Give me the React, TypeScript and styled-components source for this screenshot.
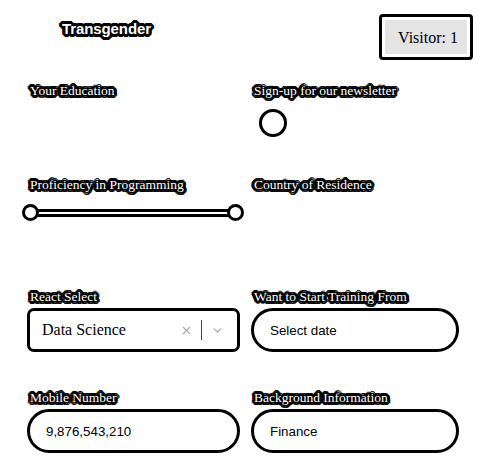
import React from 'react';
import styled, { createGlobalStyle } from 'styled-components';
import { X, ChevronDown } from 'lucide-react';

const GlobalStyle = createGlobalStyle`
    html, body {
        margin: 0;
        padding: 0;
        background: #fff;
    }
`;

const outline = `
    -1px -1px 0 #000, 1px -1px 0 #000, -1px 1px 0 #000, 1px 1px 0 #000,
    -2px -2px 0 #000, 2px -2px 0 #000, -2px 2px 0 #000, 2px 2px 0 #000,
    0 -3px 0 #000, 0 3px 0 #000, -3px 0 0 #000, 3px 0 0 #000,
    -3px -1px 0 #000, 3px -1px 0 #000, -3px 1px 0 #000, 3px 1px 0 #000,
    -1px -3px 0 #000, 1px -3px 0 #000, -1px 3px 0 #000, 1px 3px 0 #000,
    0 0 3px #000
`;

export default function App() {
    return (
        <>
            <GlobalStyle />
            <Page>
                <Header>
                    <Title>Transgender</Title>
                    <VisitorBadge>
                        <VisitorInner>Visitor: 1</VisitorInner>
                    </VisitorBadge>
                </Header>
                <FormGrid>
                    <Field>
                        <Label>Your Education</Label>
                    </Field>
                    <Field>
                        <Label>Sign-up for our newsletter</Label>
                        <Radio type="radio" />
                    </Field>
                    <Field>
                        <Label>Proficiency in Programming</Label>
                        <RangeSlider>
                            <Track />
                            <Thumb />
                            <Thumb />
                        </RangeSlider>
                    </Field>
                    <Field>
                        <Label>Country of Residence</Label>
                    </Field>
                    <Field>
                        <Label>React Select</Label>
                        <SelectBox>
                            <SelectValue>Data Science</SelectValue>
                            <Indicator>
                                <X size={13} strokeWidth={2} />
                            </Indicator>
                            <Separator />
                            <Indicator>
                                <ChevronDown size={13} strokeWidth={2.5} />
                            </Indicator>
                        </SelectBox>
                    </Field>
                    <Field>
                        <Label>Want to Start Training From</Label>
                        <PillInput placeholder="Select date" readOnly />
                    </Field>
                    <Field>
                        <Label>Mobile Number</Label>
                        <PillInput defaultValue="9,876,543,210" $indent={16} />
                    </Field>
                    <Field>
                        <Label>Background Information</Label>
                        <PillInput defaultValue="Finance" />
                    </Field>
                </FormGrid>
            </Page>
        </>
    );
}

const Page = styled.div`
    width: 485px;
    height: 467px;
    overflow: hidden;
`;

const Header = styled.div`
    display: flex;
    justify-content: space-between;
    align-items: flex-start;
    padding: 14px 12px 0 62px;
    height: 70px;
    box-sizing: border-box;
`;

const Title = styled.span`
    font-family: 'Liberation Sans', Arial, sans-serif;
    font-weight: 700;
    font-size: 15px;
    line-height: 17px;
    margin-top: 6px;
    color: #fff;
    letter-spacing: -0.1px;
    text-shadow: ${outline};
`;

const VisitorBadge = styled.div`
    border: 3px solid #000;
    border-radius: 4px;
    padding: 3px;
    background: #fff;
`;

const VisitorInner = styled.div`
    background: #e4e4e4;
    padding: 9px 9px 7px 13px;
    font-family: 'Liberation Serif', 'Times New Roman', serif;
    font-size: 16px;
    line-height: 18px;
    color: #000;
`;

const FormGrid = styled.div`
    display: grid;
    grid-template-columns: 213px 208px;
    grid-template-rows: 94px 112px 101px auto;
    column-gap: 11px;
    padding: 13px 0 0 27px;
`;

const Field = styled.div`
    display: flex;
    flex-direction: column;
    align-items: flex-start;
`;

const Label = styled.span`
    font-family: 'Liberation Serif', 'Times New Roman', serif;
    font-size: 13.5px;
    line-height: 16px;
    color: #fff;
    margin-left: 3px;
    text-shadow: ${outline};
`;

const Radio = styled.input`
    appearance: none;
    width: 28px;
    height: 28px;
    margin: 10px 0 0 8px;
    border: 3px solid #000;
    border-radius: 50%;
    background: #fff;
    box-sizing: border-box;
`;

const RangeSlider = styled.div`
    position: relative;
    width: 222px;
    height: 17px;
    margin: 11px 0 0 -5px;
    display: flex;
    justify-content: space-between;
    align-items: center;
`;

const Track = styled.div`
    position: absolute;
    left: 8px;
    right: 8px;
    top: 5px;
    height: 8px;
    box-sizing: border-box;
    border: 3px solid #000;
    background: #fff;
`;

const Thumb = styled.div`
    position: relative;
    width: 17px;
    height: 17px;
    box-sizing: border-box;
    border: 3px solid #000;
    border-radius: 50%;
    background: #fff;
`;

const SelectBox = styled.div`
    display: flex;
    align-items: center;
    width: 213px;
    height: 44px;
    margin-top: 3px;
    box-sizing: border-box;
    border: 3px solid #000;
    border-radius: 7px;
    padding: 0 10px 0 12px;
`;

const SelectValue = styled.span`
    flex: 1;
    font-family: 'Liberation Serif', 'Times New Roman', serif;
    font-size: 16px;
    color: #000;
`;

const Indicator = styled.span`
    display: inline-flex;
    align-items: center;
    justify-content: center;
    width: 20px;
    color: #aaa;
`;

const Separator = styled.span`
    width: 1px;
    height: 20px;
    background: #444;
    margin: 0 5px;
`;

const PillInput = styled.input<{ $indent?: number }>`
    width: 100%;
    height: 44px;
    margin-top: 3px;
    box-sizing: border-box;
    border: 3px solid #000;
    border-radius: 22px;
    padding: 0 0 0 ${(p) => p.$indent ?? 16}px;
    font-family: 'Liberation Sans', Arial, sans-serif;
    font-size: 13.33px;
    color: #000;
    background: #fff;
    outline: none;

    &::placeholder {
        color: #000;
    }
`;
